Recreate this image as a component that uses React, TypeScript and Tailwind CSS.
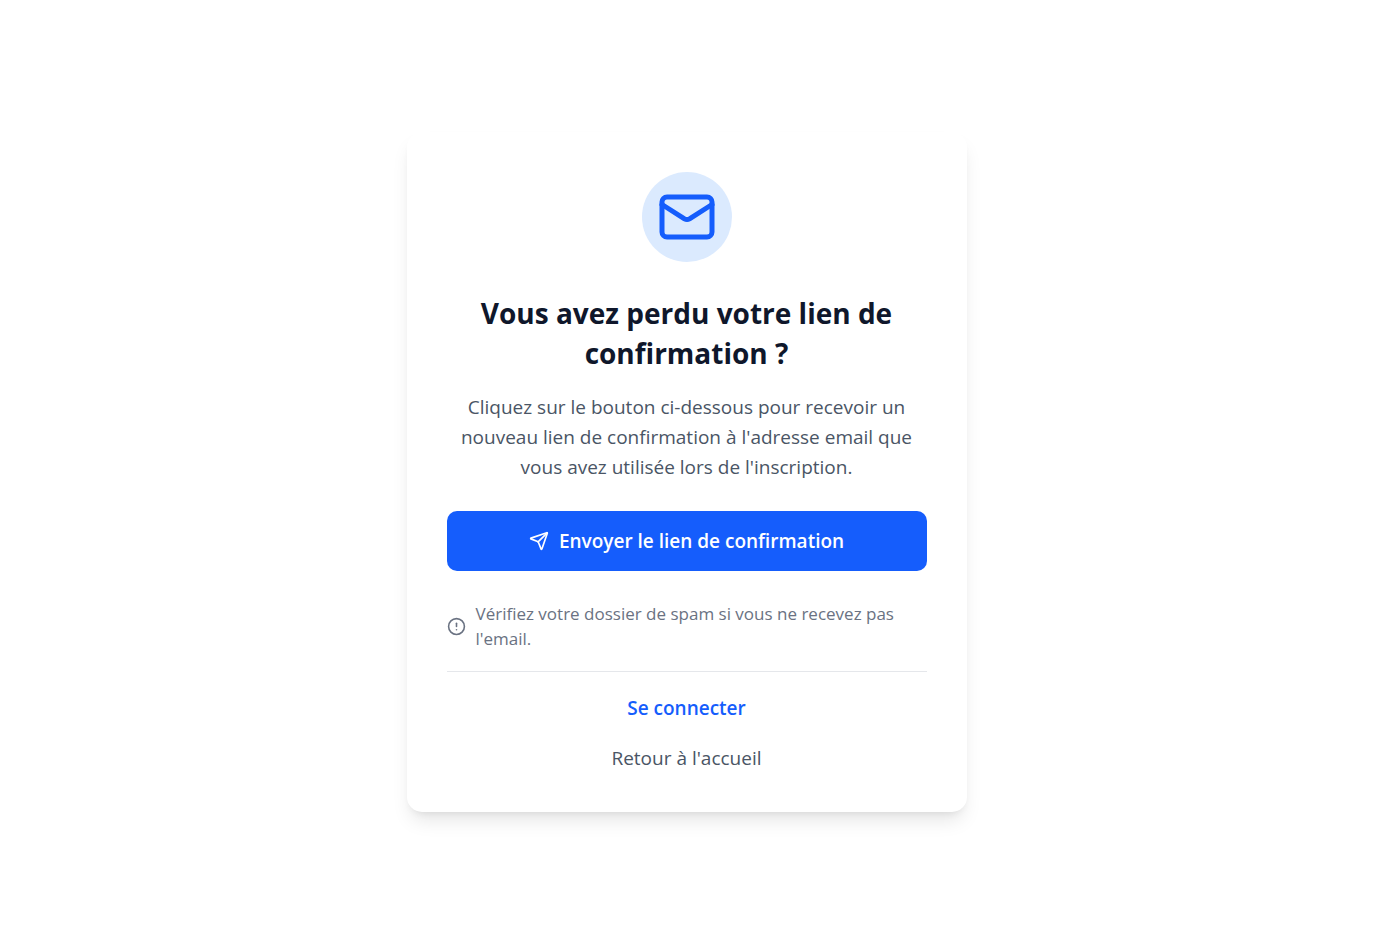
import React from "react";
import { CircleAlert, Mail, Send } from "lucide-react";

export default function App() {
  return (
    <main className="flex min-h-screen items-center justify-center bg-white p-5 font-['Segoe_UI','Open_Sans',sans-serif]">
      <section className="w-full max-w-[560px] rounded-[15px] bg-white px-10 pt-10 pb-[39px] shadow-[0_12px_19px_-4px_rgba(0,0,0,0.1),0_5px_8px_-5px_rgba(0,0,0,0.1)]">
        <div className="mx-auto flex size-[90px] items-center justify-center rounded-full bg-blue-100 text-[#155dfc]">
          <Mail size={60} aria-hidden="true" />
        </div>
        <div className="mt-[31px] text-center">
          <h1 className="text-[28px] leading-10 font-bold text-slate-900">
            Vous avez perdu votre lien de confirmation ?
          </h1>
          <p className="mt-[19px] text-[19px] leading-[30px] text-gray-600">
            Cliquez sur le bouton ci-dessous pour recevoir un nouveau lien de
            confirmation à l'adresse email que vous avez utilisée lors de
            l'inscription.
          </p>
        </div>
        <button
          type="button"
          className="mt-[29px] flex w-full items-center justify-center gap-[10px] rounded-[10px] bg-[#155dfc] py-[15px] text-[19px] leading-[30px] font-semibold text-white"
        >
          <Send size={20} aria-hidden="true" />
          Envoyer le lien de confirmation
        </button>
        <div className="mt-[30px] flex items-center gap-[10px] text-gray-500">
          <CircleAlert size={19} className="shrink-0" aria-hidden="true" />
          <p className="text-[17px] leading-[25px]">
            Vérifiez votre dossier de spam si vous ne recevez pas l'email.
          </p>
        </div>
        <nav className="mt-5 flex flex-col items-center gap-5 border-t border-gray-200 pt-[21px] text-[19px] leading-[30px]">
          <a href="#connexion" className="font-semibold text-[#155dfc]">
            Se connecter
          </a>
          <a href="#accueil" className="text-gray-600">
            Retour à l'accueil
          </a>
        </nav>
      </section>
    </main>
  );
}
